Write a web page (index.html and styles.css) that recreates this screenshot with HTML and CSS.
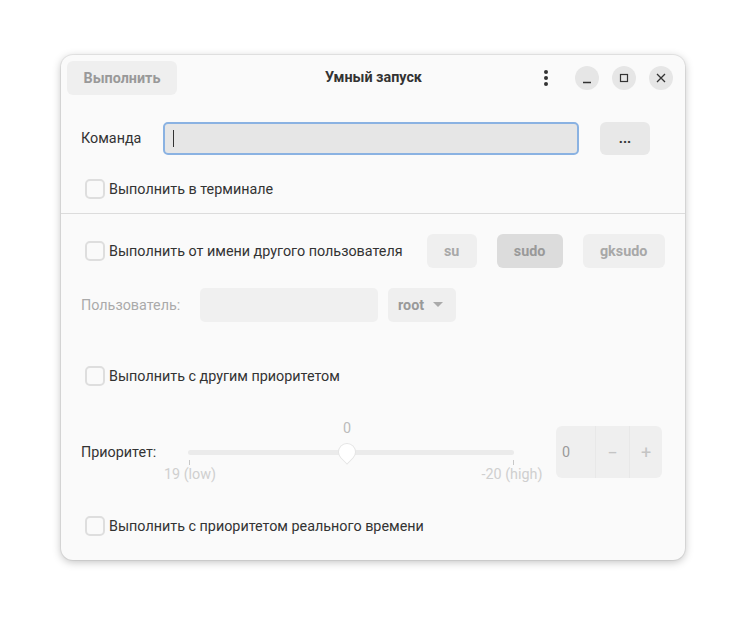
FILE: index.html
```html
<!DOCTYPE html>
<html lang="ru">
<head>
<meta charset="utf-8">
<link rel="stylesheet" href="styles.css">
</head>
<body>
<div class="window">
  <div class="header">
    <button class="hbtn">Выполнить</button>
    <div class="title">Умный запуск</div>
    <div class="controls">
      <span class="menu"><svg width="4" height="16" viewBox="0 0 4 16"><circle cx="2" cy="2" r="2" fill="#333"/><circle cx="2" cy="8" r="2" fill="#333"/><circle cx="2" cy="14" r="2" fill="#333"/></svg></span>
      <span class="wbtn"><svg width="12" height="12" viewBox="0 0 12 12"><path d="M2 10.5h8" stroke="#333" stroke-width="1.3"/></svg></span>
      <span class="wbtn"><svg width="12" height="12" viewBox="0 0 12 12"><rect x="2.5" y="2.5" width="7" height="7" fill="none" stroke="#333" stroke-width="1.2"/></svg></span>
      <span class="wbtn"><svg width="12" height="12" viewBox="0 0 12 12"><path d="M2 2l8 8M10 2l-8 8" stroke="#333" stroke-width="1.3"/></svg></span>
    </div>
  </div>
  <div class="section top">
    <div class="row cmd">
      <span class="label">Команда</span>
      <div class="entry focus"><span class="caret"></span></div>
      <button class="btn dots">...</button>
    </div>
    <label class="check r1"><span class="box"></span>Выполнить в терминале</label>
  </div>
  <div class="sep"></div>
  <div class="section bottom">
    <div class="row asuser">
      <label class="check"><span class="box"></span>Выполнить от имени другого пользователя</label>
      <div class="grp">
        <button class="btn dis su">su</button>
        <button class="btn dis sudo">sudo</button>
        <button class="btn dis gk">gksudo</button>
      </div>
    </div>
    <div class="row userrow">
      <span class="label dim">Пользователь:</span>
      <div class="entry disabled"></div>
      <div class="combo">root <svg width="10" height="6" viewBox="0 0 10 6"><path d="M0 0h10L5 5z" fill="#aaa"/></svg></div>
    </div>
    <label class="check prio"><span class="box"></span>Выполнить с другим приоритетом</label>
    <div class="row priorow">
      <span class="label">Приоритет:</span>
      <div class="slider">
        <div class="val">0</div>
        <div class="track"></div>
        <div class="knob"></div>
        <div class="tick t1"></div>
        <div class="tick t2"></div>
        <div class="mark m1">19 (low)</div>
        <div class="mark m2">-20 (high)</div>
      </div>
      <div class="spin">
        <span class="sv">0</span>
        <span class="sb">−</span>
        <span class="sb">+</span>
      </div>
    </div>
    <label class="check rt"><span class="box"></span>Выполнить с приоритетом реального времени</label>
  </div>
</div>
</body>
</html>
```
FILE: styles.css
```css
* { box-sizing: border-box; }
html, body { margin: 0; padding: 0; background: #ffffff; }
body {
  width: 746px; height: 627px;
  font-family: Roboto, "Liberation Sans", sans-serif;
  font-size: 14.35px; color: #333;
  padding: 55px 0 0 61px;
}
.window {
  width: 624px; height: 505px;
  background: #fafafa;
  border-radius: 12px;
  box-shadow: 0 2px 8px rgba(0,0,0,0.25), 0 0 0 1px rgba(0,0,0,0.06);
  overflow: hidden;
}
.header {
  height: 46px;
  display: flex; align-items: center;
  padding: 0 12px 0 6px;
  position: relative;
}
button { font-family: inherit; font-size: 14.35px; border: none; }
.hbtn {
  width: 110px; height: 34px;
  background: #efefef; color: #999; font-weight: 700;
  border-radius: 6px;
}
.title {
  position: absolute; left: 0; right: 0; text-align: center;
  font-weight: 700; pointer-events: none; top: 14px;
  padding-left: 1px;
}
.controls { margin-left: auto; display: flex; align-items: center; }
.menu { width: 16px; display: flex; justify-content: center; margin-right: 7px; }
.wbtn {
  width: 24px; height: 24px; border-radius: 50%;
  background: #e6e6e6;
  display: flex; align-items: center; justify-content: center;
  margin-left: 13px;
}
.menu + .wbtn { margin-left: 14px; }
.section { padding: 0 20px; }
.top { padding-top: 21px; padding-bottom: 14px; }
.row { display: flex; align-items: center; }
.label { color: #333; }
.dim { color: #aaa; }
.cmd .label { width: 82px; }
.entry {
  height: 33px; border-radius: 5px;
  display: flex; align-items: center;
}
.entry.focus {
  width: 416px;
  background: #e6e6e6;
  border: 2px solid #8ab2e2;
  padding-left: 8px;
}
.caret { width: 1px; height: 17px; background: #333; }
.btn {
  height: 34px; border-radius: 6px;
  background: #e8e8e8; color: #333;
}
.dots { width: 50px; margin-left: 21px; font-weight: 700; height: 33px; }
.check {
  display: flex; align-items: center;
  padding-left: 4px;
}
.box {
  width: 20px; height: 20px;
  border: 2px solid #dedede; border-radius: 5px;
  background: #fafafa;
  margin-right: 4px;
}
.r1 { margin-top: 24px; }
.sep { height: 1px; background: #dcdcdc; }
.bottom { padding-top: 20px; }
.grp { display: flex; margin-left: 24px; }
.dis { background: #efefef; color: #a8a8a8; font-weight: 700; }
.su { width: 50px; }
.sudo { width: 66px; margin-left: 20px; background: #dcdcdc; color: #999; }
.gk { width: 82px; margin-left: 20px; }
.userrow { margin-top: 20px; }
.userrow .label { width: 119px; }
.entry.disabled { width: 178px; height: 34px; background: #f0f0f0; }
.combo {
  width: 68px; height: 34px; margin-left: 10px;
  background: #efefef; border-radius: 5px;
  color: #999; font-weight: 700;
  display: flex; align-items: center; padding-left: 10px; gap: 9px;
}
.prio { margin-top: 44px; }
.priorow { margin-top: 40px; height: 52px; }
.priorow .label { width: 107px; }
.slider { position: relative; width: 328px; height: 52px; }
.track {
  position: absolute; left: 0; right: 2px; top: 24px;
  height: 5px; border-radius: 3px; background: #ebebeb;
}
.knob {
  position: absolute; left: 150px; top: 17px;
  width: 18px; height: 18px;
  background: #fff;
  border: 1px solid #e4e4e4;
  border-radius: 50% 50% 50% 0;
  transform: rotate(-45deg);
}
.val {
  position: absolute; left: 159px; top: -6px;
  transform: translateX(-50%);
  color: #bbb;
}
.tick { position: absolute; width: 1px; height: 5px; background: #c8c8c8; top: 34px; }
.t1 { left: 1px; }
.t2 { left: 325px; }
.mark { position: absolute; top: 40px; color: #cfcfcf; transform: translateX(-50%); white-space: nowrap; }
.m1 { left: 2px; }
.m2 { left: 324px; }
.spin {
  margin-left: 40px;
  width: 106px; height: 52px;
  background: #efefef; border-radius: 6px;
  display: flex; align-items: stretch;
}
.sv { width: 40px; display: flex; align-items: center; padding-left: 6px; color: #999; border-right: 1px solid #e8e8e8; }
.sb { width: 33px; display: flex; align-items: center; justify-content: center; color: #c4c4c4; font-size: 18px; }
.sb + .sb { border-left: 1px solid #e8e8e8; }
.rt { margin-top: 38px; }
```
